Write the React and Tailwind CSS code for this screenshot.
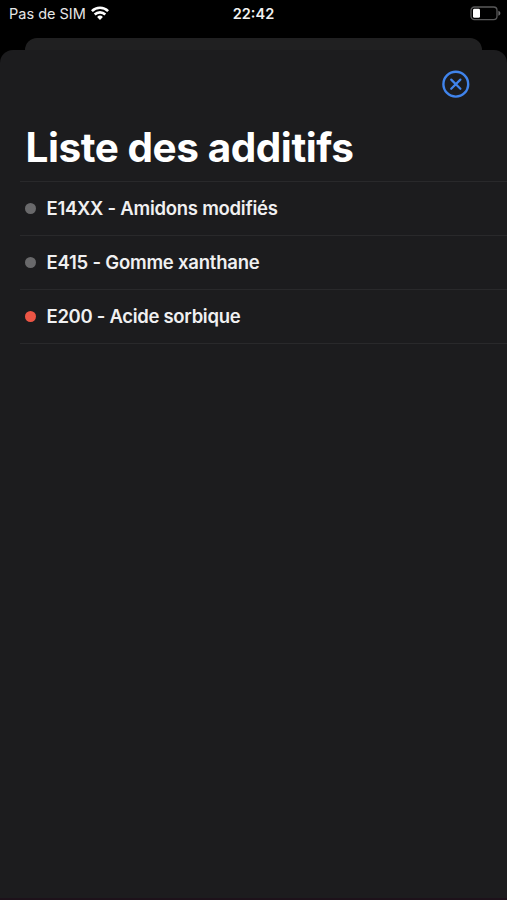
import React from 'react';

const additives = [
  { code: 'E14XX', name: 'Amidons modifiés', dot: 'bg-[#69696b]', spacing: 'tracking-[-0.26px]' },
  { code: 'E415', name: 'Gomme xanthane', dot: 'bg-[#69696b]', spacing: 'tracking-[-0.22px]' },
  { code: 'E200', name: 'Acide sorbique', dot: 'bg-[#ec5545]', spacing: 'tracking-[-0.31px]' }
];

const WifiIcon = () => (
  <svg className="w-[18px] h-[14px] mb-[2px]" viewBox="0 0 18 14" fill="none" stroke="#fff" strokeWidth="2.6">
    <path d="M0.9 5.1a11.6 11.6 0 0 1 16.2 0" />
    <path d="M3.7 8.5a7.6 7.6 0 0 1 10.6 0" />
    <path d="M9 13.9L6.1 11a4.1 4.1 0 0 1 5.8 0z" fill="#fff" stroke="none" />
  </svg>
);

const BatteryIcon = () => (
  <svg className="w-[31px] h-[15px]" viewBox="0 0 31 15" fill="none">
    <rect x="1" y="1" width="26" height="12.6" rx="3.4" stroke="#59595a" strokeWidth="1.3" />
    <rect x="3" y="2.8" width="7" height="9" rx="1.4" fill="#fff" />
    <path d="M28.4 4.8c1.3.4 2 1.4 2 2.5s-.7 2.1-2 2.5z" fill="#6a6a6b" />
  </svg>
);

const CloseIcon = () => (
  <svg className="w-7 h-7" viewBox="0 0 28 28" fill="none" stroke="#4084ec" strokeLinecap="round">
    <circle cx="13.8" cy="14.2" r="12.4" strokeWidth="2.4" />
    <path d="M9.2 9.6l9.2 9.2M18.4 9.6l-9.2 9.2" strokeWidth="2.2" />
  </svg>
);

const StatusBar = () => (
  <div className="grid grid-cols-3 items-center h-7 shrink-0 text-[14.5px] leading-none text-[#e6e6e6]">
    <div className="flex items-center gap-[5px] pl-[9px] whitespace-nowrap">
      <span>Pas de SIM</span>
      <WifiIcon />
    </div>
    <span className="text-center font-semibold text-[#f2f2f2]">22:42</span>
    <div className="flex justify-end pr-[6px] pb-px">
      <BatteryIcon />
    </div>
  </div>
);

const App = () => {
  return (
    <div className="flex flex-col w-full h-[900px] overflow-hidden bg-black font-['Inter',sans-serif]">
      <StatusBar />

      {/* Edge of the sheet stacked behind */}
      <div className="mt-[10px] mx-[25px] h-3 shrink-0 rounded-t-[12px] bg-[#202021]"></div>

      <main className="flex-1 rounded-t-[13px] bg-[#1c1c1e]">
        <div className="flex justify-end pt-5 pr-[37px]">
          <button aria-label="Fermer">
            <CloseIcon />
          </button>
        </div>

        <h1 className="mt-[26px] pl-[25.5px] h-[57px] text-[40.5px] leading-[48px] tracking-[-0.45px] font-bold text-white whitespace-nowrap">
          Liste des additifs
        </h1>

        <ul className="ml-5 border-t border-[#29292b]">
          {additives.map((item) => (
            <li key={item.code} className="flex items-center h-[54px] pl-[5px] border-b border-[#29292b]">
              <span className={`w-[11px] h-[11px] mr-[10.5px] rounded-full ${item.dot}`}></span>
              <span className={`text-[18.5px] font-semibold text-[#f0f0f1] ${item.spacing}`}>
                {item.code} - {item.name}
              </span>
            </li>
          ))}
        </ul>
      </main>

      <div className="h-[2px] shrink-0 bg-[#1d111a]"></div>
    </div>
  );
};

export default App;
